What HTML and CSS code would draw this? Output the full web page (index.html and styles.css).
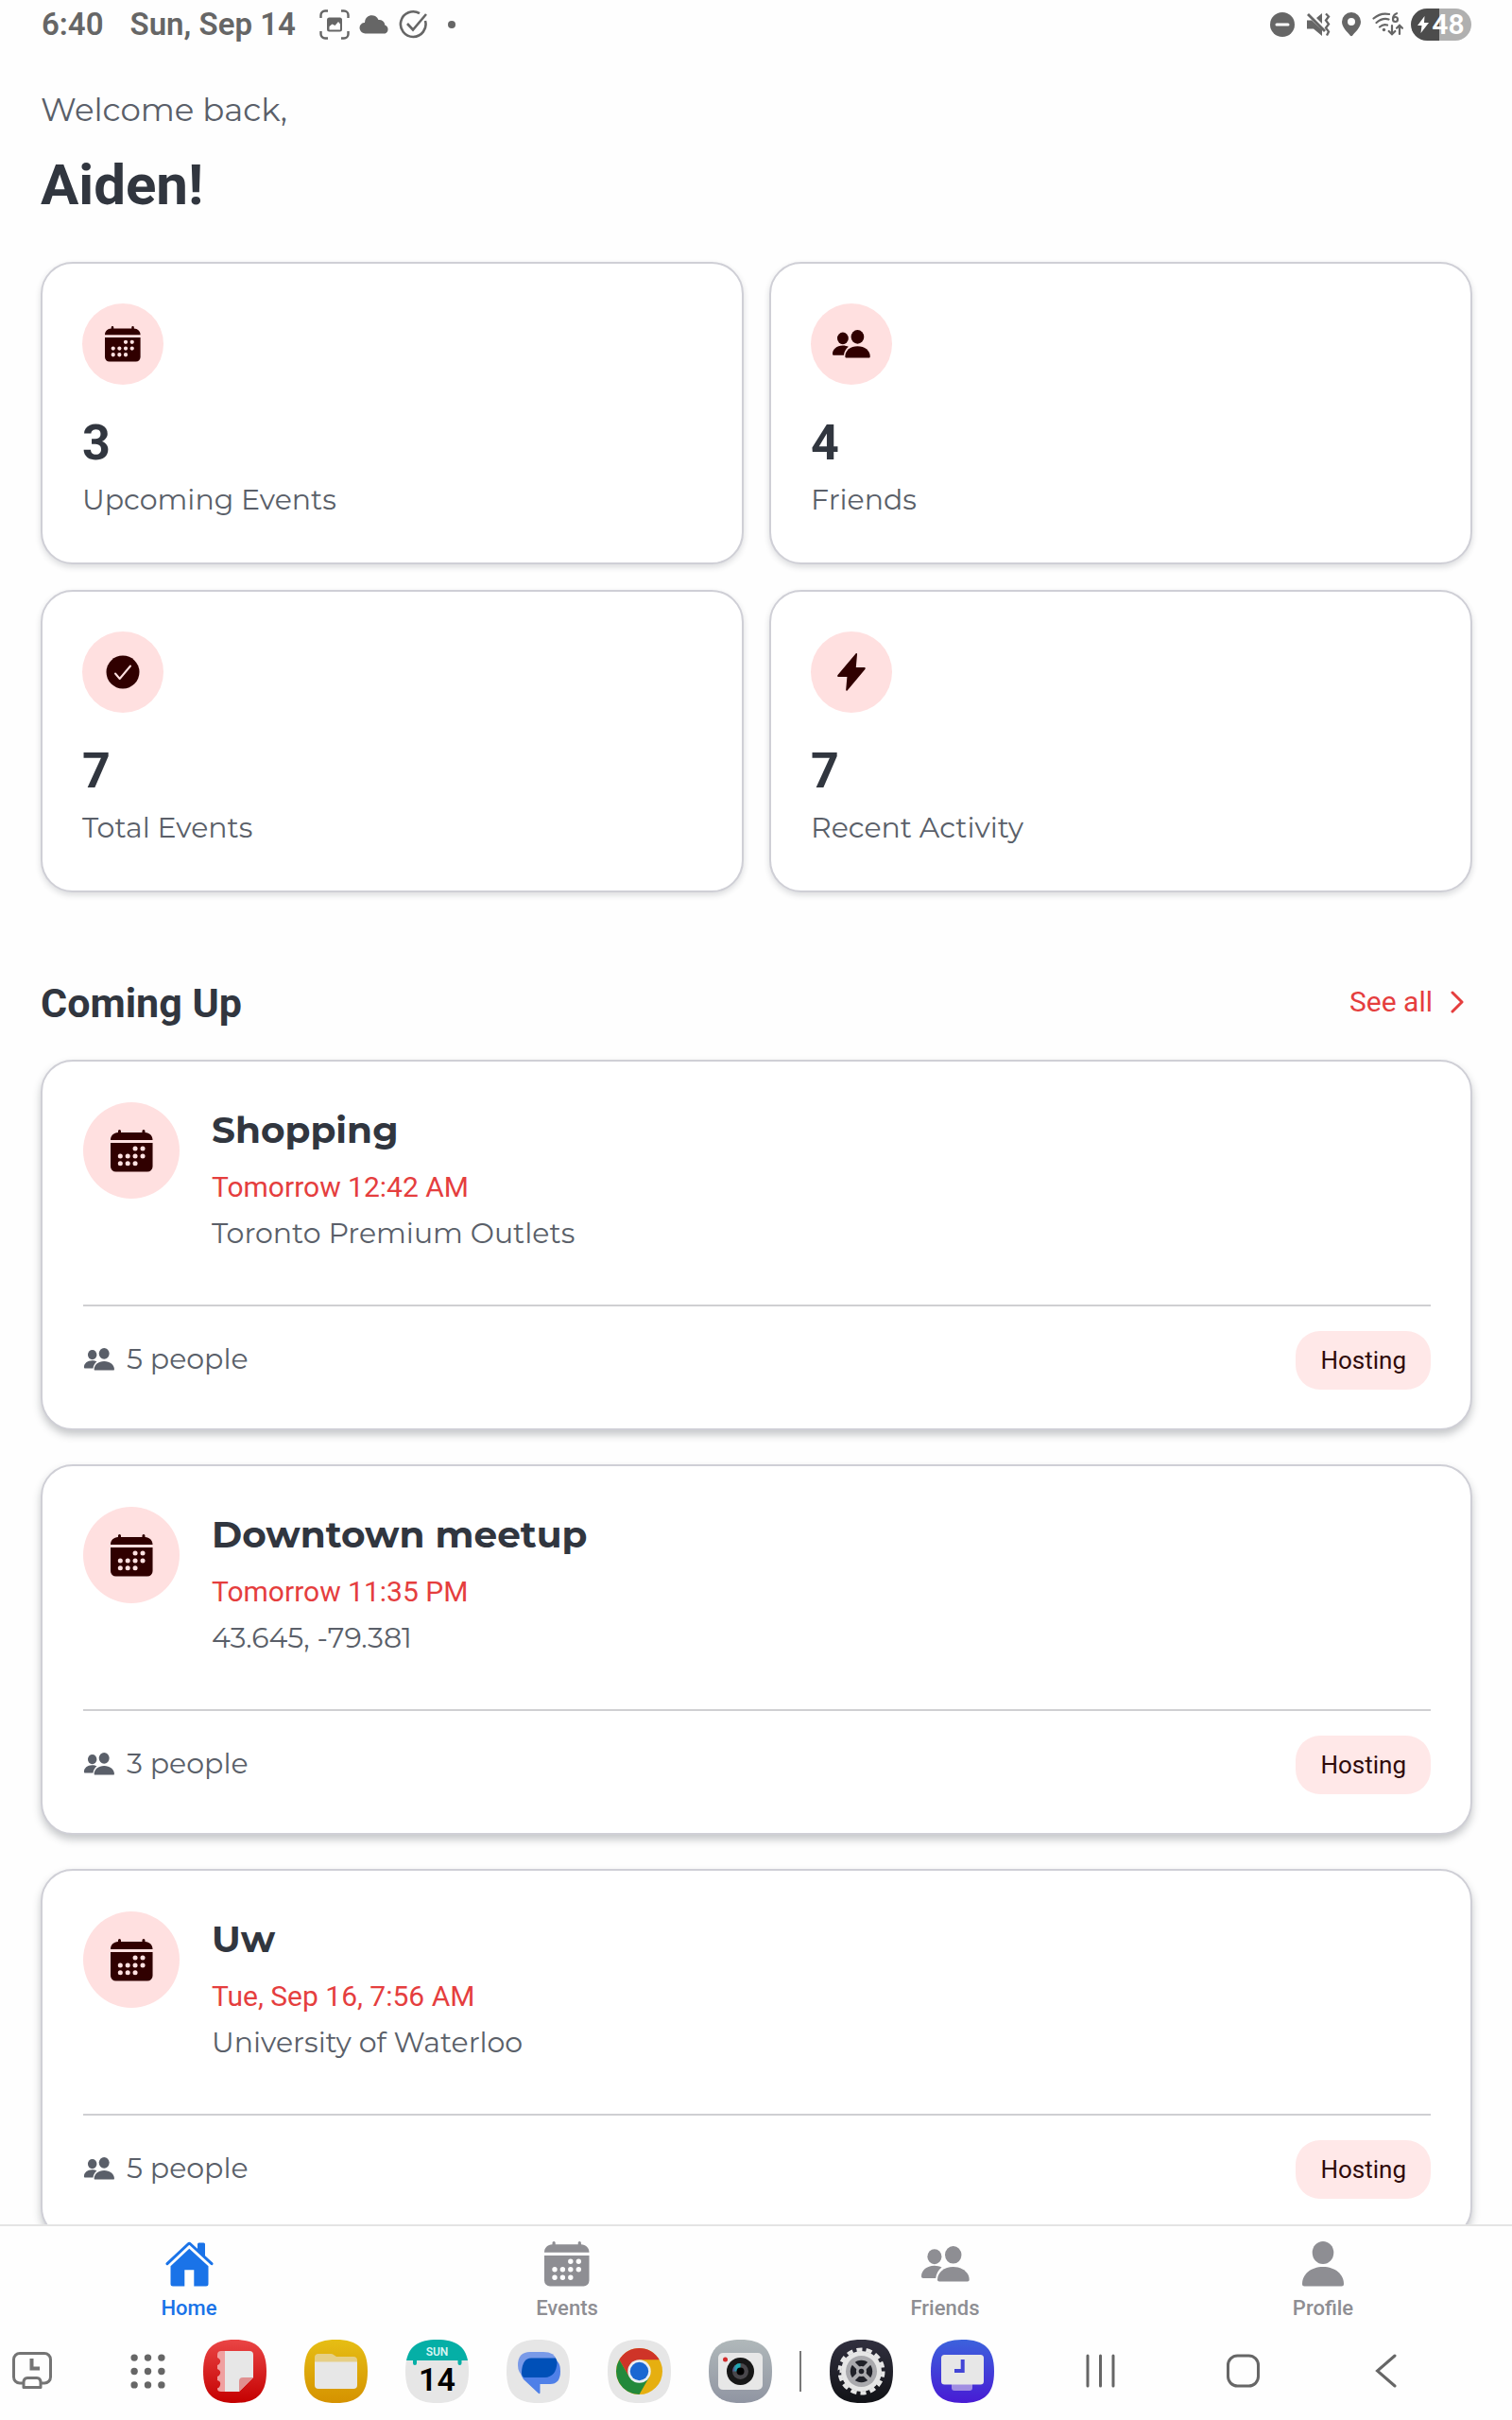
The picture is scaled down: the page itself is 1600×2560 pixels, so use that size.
FILE: index.html
```html
<!DOCTYPE html>
<html lang="en">
<head>
<meta charset="utf-8">
<meta name="viewport" content="width=device-width, initial-scale=1">
<title>Home</title>
<link rel="stylesheet" href="styles.css">
</head>
<body>
<svg class="sprite" aria-hidden="true">
  <symbol id="calendar" viewBox="0 0 48 48">
    <path d="M8.500 3.200V1.600a1.600 1.600 0 0 1 3.200 0v1.600h24V1.600a1.600 1.600 0 0 1 3.200 0v1.600c5 .3 8.600 3.500 8.600 8.500H0C0 6.700 3.500 3.500 8.500 3.200z"/>
    <path fill-rule="evenodd" d="M0 15h47.500v26.500a6 6 0 0 1-6 6H6a6 6 0 0 1-6-6zM25.100 21.300a2.700 2.700 0 1 0 5.400 0a2.700 2.700 0 1 0-5.400 0zM33.600 21.300a2.700 2.700 0 1 0 5.400 0a2.700 2.700 0 1 0-5.400 0zM8.300 29.800a2.700 2.700 0 1 0 5.400 0a2.700 2.700 0 1 0-5.400 0zM16.700 29.800a2.700 2.700 0 1 0 5.400 0a2.700 2.700 0 1 0-5.400 0zM25.100 29.800a2.700 2.700 0 1 0 5.400 0a2.700 2.700 0 1 0-5.400 0zM33.600 29.800a2.700 2.700 0 1 0 5.400 0a2.700 2.700 0 1 0-5.400 0zM8.300 38.200a2.700 2.700 0 1 0 5.400 0a2.700 2.700 0 1 0-5.400 0zM16.700 38.200a2.700 2.700 0 1 0 5.400 0a2.700 2.700 0 1 0-5.400 0zM25.100 38.200a2.700 2.700 0 1 0 5.400 0a2.700 2.700 0 1 0-5.400 0z"/>
  </symbol>
  <symbol id="people" viewBox="0 0 51 38">
    <ellipse cx="33.700" cy="9.300" rx="8.700" ry="9.300"/>
    <ellipse cx="13.900" cy="11.200" rx="7.500" ry="8"/>
    <path d="M17 35.500C17 28 24 22 33.700 22s17 6 17 13.500c0 1.300-.7 1.900-2 1.900H19c-1.300 0-2-.6-2-1.900z"/>
    <path d="M0 32c0-6 5.500-11.200 13.800-11.200 3 0 5.600.7 7.700 1.800C18 25.200 15.800 29.500 15.200 34H2c-1.300 0-2-.7-2-2z"/>
  </symbol>
  <symbol id="check" viewBox="0 0 36 36">
    <circle cx="18" cy="18" r="17.500"/>
    <path class="mark" d="M10 19.500l4.700 5.500L26 11.500"/>
  </symbol>
  <symbol id="bolt" viewBox="0 0 30 40">
    <path d="M19.500.5c.9-.9 1.600-.4 1.500.8L19.800 15h8.600c1.300 0 1.700.9 1 2L10.800 39.200c-.9 1-1.700.6-1.600-.7L10.400 25H1.500c-1.300 0-1.700-.9-1-2z"/>
  </symbol>
  <symbol id="home" viewBox="0 0 51 48">
    <path d="M34 10V3a1.500 1.500 0 0 1 1.500-1.500h5A1.500 1.500 0 0 1 42 3v14z"/>
    <path d="M25.300 7.800L45.500 26.300V45a2.500 2.500 0 0 1-2.500 2.500H30.300V30.300H20.300V47.500H8A2.500 2.500 0 0 1 5.500 45V26.300z"/>
    <path class="roof" d="M2 23.700L24 3q1.300-1.200 2.600 0L49 23.700"/>
  </symbol>
  <symbol id="person" viewBox="0 0 44 48">
    <ellipse cx="22" cy="12" rx="11.300" ry="12"/>
    <path d="M0 45C0 35 9 27 22 27s22 8 22 18c0 1.700-.8 2.500-2.500 2.500h-39C.8 47.500 0 46.700 0 45z"/>
  </symbol>
  <symbol id="tile" viewBox="0 0 67 67">
    <path d="M33.500 0C57 0 67 10 67 33.500S57 67 33.500 67 0 57 0 33.500 10 0 33.500 0z"/>
  </symbol>
</svg>

<div class="screen">
  <header class="status">
    <div class="status-side">
      <span class="clock">6:40</span>
      <span class="date">Sun, Sep 14</span>
      <span class="status-icons">
        <svg width="32" height="32" viewBox="0 0 32 32"><path d="M1.500 9V6a4.500 4.500 0 0 1 4.500-4.500h3M23 1.500h3A4.500 4.500 0 0 1 30.500 6v3M30.500 23v3a4.500 4.500 0 0 1-4.500 4.500h-3M9 30.500H6A4.500 4.500 0 0 1 1.500 26v-3" fill="none" stroke="currentColor" stroke-width="2.400"/><rect x="8" y="8.500" width="16" height="15" rx="2.500" fill="currentColor"/><path fill="#fff" d="M10.500 21.500v-3.500l3-2.500 3 1.500 3.500-4 2 2.500v6z"/></svg>
        <svg width="32" height="20" viewBox="0 0 32 20"><path fill="currentColor" d="M6.500 19.500A6 6 0 0 1 3 8.700 4 4 0 0 1 6 8 7.500 7.500 0 0 1 20.500 5a6 6 0 0 1 6.800 5.500A4.800 4.800 0 0 1 27.500 19.500z"/></svg>
        <svg width="32" height="32" viewBox="0 0 32 32"><path d="M22 4.200A13.300 13.300 0 1 0 28 12M9 15l6 6.500L29 5" fill="none" stroke="currentColor" stroke-width="2.600"/></svg>
        <svg class="more" width="8" height="8" viewBox="0 0 8 8"><circle cx="4" cy="4" r="4" fill="currentColor"/></svg>
      </span>
    </div>
    <div class="status-side status-right">
      <svg width="26" height="26" viewBox="0 0 26 26"><circle cx="13" cy="13" r="13" fill="currentColor"/><path d="M7 13h12" stroke="#fff" stroke-width="3" stroke-linecap="round"/></svg>
      <svg width="26" height="26" viewBox="0 0 26 26"><path fill="currentColor" d="M1 8.500h5L17 19v6L8 17.500H1zM11 6l6-5v11zM1 3l2-2 18 18-2 2z"/><path d="M21 1.500l3 3-3 4 3 4-3 4 3 4-2 4" fill="none" stroke="currentColor" stroke-width="2.300"/></svg>
      <svg width="20" height="26" viewBox="0 0 20 26"><path fill="currentColor" fill-rule="evenodd" d="M10 0a10 10 0 0 1 10 10c0 6-6 11-8.700 14.500q-1.300 1.500-2.600 0C6 21 0 16 0 10A10 10 0 0 1 10 0zM6 10a4 4 0 1 0 8 0a4 4 0 1 0-8 0z"/></svg>
      <svg width="33" height="26" viewBox="0 0 33 26"><g fill="none" stroke="currentColor" stroke-width="2.200" stroke-linecap="round"><path d="M1.500 6.500Q9 0 18 2M4.500 11Q11 5.500 17.500 7.500M8 15.500q4-3.500 8-2M21 14v9m-3.300-3l3.300 3.300L24.300 20M29 23v-9m-3 2.700l3-3 3 3M26 1.200q-3.800 1.200-4 5.800"/><circle cx="24.500" cy="7.500" r="2.500"/></g><circle cx="12.500" cy="18.500" r="1.700" fill="currentColor"/></svg>
      <span class="battery"><svg width="12" height="18" viewBox="0 0 12 18"><path fill="#fff" d="M7.500 0L0 10h4.500L3.500 18 12 7H7z"/></svg>48</span>
    </div>
  </header>

  <main class="content">
    <p class="welcome">Welcome back,</p>
    <h1 class="name">Aiden!</h1>

    <section class="stats" aria-label="Overview">
      <article class="card stat"><span class="badge"><svg class="icon-38"><use href="#calendar"/></svg></span><strong class="count">3</strong><span class="label">Upcoming Events</span></article>
      <article class="card stat"><span class="badge"><svg class="icon-40"><use href="#people"/></svg></span><strong class="count">4</strong><span class="label">Friends</span></article>
      <article class="card stat"><span class="badge"><svg class="icon-36"><use href="#check"/></svg></span><strong class="count">7</strong><span class="label">Total Events</span></article>
      <article class="card stat"><span class="badge"><svg class="icon-40"><use href="#bolt"/></svg></span><strong class="count">7</strong><span class="label">Recent Activity</span></article>
    </section>

    <section class="coming">
      <div class="section-head">
        <h2>Coming Up</h2>
        <a class="see-all" href="#events">See all<svg width="16" height="24" viewBox="0 0 16 24"><path d="M3 2l10 10L3 22" fill="none" stroke="currentColor" stroke-width="3" stroke-linecap="round" stroke-linejoin="round"/></svg></a>
      </div>

      <article class="card event">
        <div class="event-top">
          <span class="badge badge-large"><svg class="icon-45"><use href="#calendar"/></svg></span>
          <div class="event-text"><h3>Shopping</h3><p class="when">Tomorrow 12:42 AM</p><p class="where">Toronto Premium Outlets</p></div>
        </div>
        <div class="event-foot"><span class="going"><svg class="icon-32"><use href="#people"/></svg>5 people</span><span class="role">Hosting</span></div>
      </article>

      <article class="card event">
        <div class="event-top">
          <span class="badge badge-large"><svg class="icon-45"><use href="#calendar"/></svg></span>
          <div class="event-text"><h3>Downtown meetup</h3><p class="when">Tomorrow 11:35 PM</p><p class="where">43.645, -79.381</p></div>
        </div>
        <div class="event-foot"><span class="going"><svg class="icon-32"><use href="#people"/></svg>3 people</span><span class="role">Hosting</span></div>
      </article>

      <article class="card event">
        <div class="event-top">
          <span class="badge badge-large"><svg class="icon-45"><use href="#calendar"/></svg></span>
          <div class="event-text"><h3>Uw</h3><p class="when">Tue, Sep 16, 7:56 AM</p><p class="where">University of Waterloo</p></div>
        </div>
        <div class="event-foot"><span class="going"><svg class="icon-32"><use href="#people"/></svg>5 people</span><span class="role">Hosting</span></div>
      </article>
    </section>
  </main>

  <nav class="tabs" aria-label="Main">
    <a class="tab active" href="#home" aria-current="page"><svg class="icon-50"><use href="#home"/></svg>Home</a>
    <a class="tab" href="#events"><svg class="icon-48"><use href="#calendar"/></svg>Events</a>
    <a class="tab" href="#friends"><svg class="icon-50"><use href="#people"/></svg>Friends</a>
    <a class="tab" href="#profile"><svg class="icon-48"><use href="#person"/></svg>Profile</a>
  </nav>

  <footer class="dock">
    <button class="key" type="button" aria-label="Recent screen"><svg width="44" height="40" viewBox="0 0 44 40"><g fill="none" stroke="#747474" stroke-width="3"><path d="M12.500 33H9a6.500 6.500 0 0 1-6.500-6.500V8A6.500 6.500 0 0 1 9 1.500h26A6.500 6.500 0 0 1 41.500 8v18.500A6.500 6.500 0 0 1 35 33h-4"/><path d="M17 27.500h10q4 0 4 5v5H13v-5q0-5 4-5z" stroke-linejoin="round"/></g><path d="M21.500 7v10.500H30" fill="none" stroke="#747474" stroke-width="4"/></svg></button>
    <div class="apps">
      <button class="dots" type="button" aria-label="All apps"><svg width="36" height="36" viewBox="0 0 36 36" fill="#666"><circle cx="4" cy="4" r="3.600"/><circle cx="18" cy="4" r="3.600"/><circle cx="32" cy="4" r="3.600"/><circle cx="4" cy="18" r="3.600"/><circle cx="18" cy="18" r="3.600"/><circle cx="32" cy="18" r="3.600"/><circle cx="4" cy="32" r="3.600"/><circle cx="18" cy="32" r="3.600"/><circle cx="32" cy="32" r="3.600"/></svg></button>
      <button type="button" aria-label="Notes"><svg viewBox="0 0 67 67"><defs><linearGradient id="red" x2="0" y2="1"><stop stop-color="#ea4545"/><stop offset="1" stop-color="#c40000"/></linearGradient></defs><use href="#tile" fill="url(#red)"/><path fill="#f0a0a0" d="M24 12h-5q-4 0-4 4v3q4 2 3 5t-3 3v4q4 2 3 5t-3 3v4q4 1 3 5t-3 3v1q0 3 4 3h5z"/><path fill="#e7e7e7" d="M23 12h26q4 0 4 4v24L38 55H23z"/><path fill="#e09090" d="M53 40L38 55V44q0-4 4-4z"/></svg></button>
      <button type="button" aria-label="Files"><svg viewBox="0 0 67 67"><defs><linearGradient id="gold" x2="0" y2="1"><stop stop-color="#e6be14"/><stop offset="1" stop-color="#d59200"/></linearGradient></defs><use href="#tile" fill="url(#gold)"/><path fill="#e6cf86" d="M11 30V19q0-4 4-4h13q2 0 3 1l3 2h18q4 0 4 4v8z"/><path fill="#e7e7e7" d="M11 23.500h45V48q0 4-4 4H15q-4 0-4-4z"/></svg></button>
      <button type="button" aria-label="Calendar"><svg viewBox="0 0 67 67"><defs><clipPath id="top"><path d="M0 0h67v22H0z"/></clipPath></defs><use href="#tile" fill="#e6e6e6"/><use href="#tile" fill="#05afa6" clip-path="url(#top)"/><path stroke="#05afa6" stroke-width="4" stroke-linecap="round" d="M10 20v5M57.500 20v5"/><text x="33.500" y="16.500" class="day">SUN</text><text x="33.500" y="54" class="number">14</text></svg></button>
      <button type="button" aria-label="Messages"><svg viewBox="0 0 67 67"><use href="#tile" fill="#e6e6e6"/><path fill="#4f80e8" d="M15 33q0-13 13-13h18q11 0 11 13.500T46 47H35.500v9q0 2-2 .5L18 42q-3-4-3-9z"/><path fill="#799ae8" d="M25 13h14q12 0 14 9c1 8-4 16-12 17H18q-6-4-6-12 0-14 13-14z"/><path fill="#0050b8" d="M26 19.500h26q1.500 2 1.500 5-1 15-13 15.500h-22q-3-2-2.500-6 1-14.500 10-14.500z"/></svg></button>
      <button type="button" aria-label="Chrome"><svg viewBox="0 0 67 67"><use href="#tile" fill="#e6e6e6"/><circle cx="33.500" cy="33.500" r="24.500" fill="#e6af10"/><path fill="#cf3428" d="M12.300 21.200A24.500 24.500 0 0 1 54.700 21.200H33.500V33.500L22.900 39.600z"/><path fill="#23893b" d="M12.300 21.200A24.500 24.500 0 0 0 33.500 58L44.100 39.600 33.500 33.500 22.900 39.600z"/><circle cx="33.500" cy="33.500" r="12.200" fill="#e9eef2"/><circle cx="33.500" cy="33.500" r="9.700" fill="#1967d2"/></svg></button>
      <button type="button" aria-label="Camera"><svg viewBox="0 0 67 67"><defs><linearGradient id="steel" x2="0" y2="1"><stop stop-color="#b0b8ba"/><stop offset="1" stop-color="#9095a2"/></linearGradient><linearGradient id="lens"><stop stop-color="#624080"/><stop offset=".5" stop-color="#20aab4"/></linearGradient></defs><use href="#tile" fill="url(#steel)"/><rect x="10" y="14" width="47" height="39" rx="5" fill="#e7e7e7"/><circle cx="17.500" cy="21" r="2.500" fill="#d32b2b"/><circle cx="33.500" cy="33.500" r="14.500" fill="#171717"/><circle cx="33.500" cy="33.500" r="8.500" fill="#49474b"/><path d="M25 33.500a8.500 8.500 0 0 1 8.500-8.500v8.500z" fill="url(#lens)"/><circle cx="33.500" cy="33.500" r="4" fill="#000"/></svg></button>
    </div>
    <span class="divider"></span>
    <div class="apps">
      <button type="button" aria-label="Settings"><svg viewBox="0 0 67 67"><defs><linearGradient id="night" x2="0" y2="1"><stop stop-color="#31303f"/><stop offset="1" stop-color="#111216"/></linearGradient></defs><use href="#tile" fill="url(#night)"/><circle cx="33.500" cy="33.500" r="21.500" fill="#e6e6e6"/><circle cx="33.500" cy="33.500" r="23" fill="none" stroke="#e6e6e6" stroke-width="4" pathLength="140" stroke-dasharray="6 4"/><circle cx="33.500" cy="33.500" r="16.500" fill="#a9a9ad"/><circle cx="33.500" cy="33.500" r="11.700" fill="#1f2028"/><path d="M24 24l19 19M43 24L24 43" stroke="#a9a9ad" stroke-width="4"/><circle cx="33.500" cy="33.500" r="5.500" fill="#a9a9ad"/><circle cx="33.500" cy="33.500" r="2.800" fill="#1f2028"/></svg></button>
      <button type="button" aria-label="Screen time"><svg viewBox="0 0 67 67"><defs><linearGradient id="indigo" x2="0" y2="1"><stop stop-color="#3c62dc"/><stop offset="1" stop-color="#481bd4"/></linearGradient></defs><use href="#tile" fill="url(#indigo)"/><path fill="#a18ee2" d="M22 46h22v5q0 3-3 3H25q-3 0-3-3z"/><rect x="11" y="16" width="45" height="31.500" rx="3.500" fill="#e7e7e7"/><path d="M33.700 21v12H25" fill="none" stroke="#4345d6" stroke-width="4"/></svg></button>
    </div>
    <div class="keys">
      <button class="key" type="button" aria-label="Recents"><svg width="44" height="36" viewBox="0 0 44 36"><path d="M8 2v32M21.500 2v32M35 2v32" stroke="#666" stroke-width="3" stroke-linecap="round"/></svg></button>
      <button class="key" type="button" aria-label="Home screen"><svg width="44" height="36" viewBox="0 0 44 36"><rect x="5.500" y="2" width="32" height="32" rx="10" fill="none" stroke="#666" stroke-width="3"/></svg></button>
      <button class="key" type="button" aria-label="Back"><svg width="44" height="36" viewBox="0 0 44 36"><path d="M31 2L12.500 18 31 34" fill="none" stroke="#666" stroke-width="3" stroke-linecap="round"/></svg></button>
    </div>
  </footer>
</div>
</body>
</html>
```
FILE: styles.css
```css
* { box-sizing: border-box; }

body {
  margin: 0;
  background: #fefefe;
  color: #31363f;
  font-family: Roboto, sans-serif;
}

h1, h2, h3, p { margin: 0; }
svg { display: block; flex: none; }
a { text-decoration: none; }
button { padding: 0; border: 0; background: none; }

.sprite { position: absolute; width: 0; height: 0; }

.screen {
  display: flex;
  flex-direction: column;
  height: 100vh;
}

/* Status bar */
.status {
  display: flex;
  flex: none;
  align-items: center;
  justify-content: space-between;
  height: 51px;
  padding: 0 43px 0 44px;
  color: #666;
  font-size: 33px;
  font-weight: 600;
}
.status-side { display: flex; align-items: center; }
.date { margin-left: 28px; }
.status-icons { display: flex; align-items: center; gap: 10px; margin-left: 25px; }
.more { margin-left: 10px; }
.status-right { gap: 12px; }
.battery {
  display: flex;
  align-items: center;
  justify-content: center;
  gap: 3px;
  width: 64px;
  height: 34px;
  margin-left: -4px;
  border-radius: 17px;
  background: linear-gradient(90deg, #4c4c4c 47%, #b0b0b0 47%);
  color: #fff;
  font-size: 30px;
}

/* Scrolling content */
.content {
  flex: 1;
  min-height: 0;
  overflow-y: auto;
  padding: 43px 42px 36px 43px;
  scrollbar-width: none;
}
.welcome, .label, .where, .going, .event h3 { font-family: Montserrat, Inter, sans-serif; }
.welcome, .label, .where, .going { color: #5a5f69; font-weight: 400; }
.welcome { font-size: 34px; line-height: 44px; }
.name { margin-top: 22px; font-size: 60px; line-height: 72px; }

.card {
  border: 2px solid #cfcfd6;
  border-radius: 34px;
  background: #fff;
}

.badge {
  display: flex;
  align-items: center;
  justify-content: center;
  width: 86px;
  height: 86px;
  border-radius: 50%;
  background: #ffe0e0;
  fill: #300000;
}
.badge-large { flex: none; width: 102px; height: 102px; }

.stats {
  display: grid;
  grid-template-columns: 1fr 1fr;
  gap: 27px;
  margin-top: 45px;
}
.stat {
  display: flex;
  flex-direction: column;
  padding: 42px 42px 44px;
  box-shadow: 0 3px 6px rgba(40, 45, 55, .16);
}
.count { margin-top: 30px; font-size: 52px; line-height: 64px; }
.label { margin-top: 6px; font-size: 30px; line-height: 44px; }

.section-head {
  display: flex;
  align-items: center;
  justify-content: space-between;
  margin: 90px 0 33px;
  padding-right: 8px;
}
.section-head h2 { font-size: 43px; line-height: 54px; }
.see-all {
  display: flex;
  align-items: center;
  gap: 18px;
  padding-bottom: 3px;
  color: #e53e3e;
  font-size: 30px;
}

.event { padding: 43px 42px 41px 43px; box-shadow: 0 5px 9px rgba(40, 45, 55, .26); }
.event + .event { margin-top: 36px; }
.event-top { display: flex; gap: 34px; height: 216px; border-bottom: 2px solid #cfcfd2; }
.event h3 { margin-top: 4px; font-size: 39px; font-weight: 700; line-height: 50px; }
.when { margin-top: 16px; color: #e53e3e; font-size: 30px; line-height: 40px; }
.where { margin-top: 8px; font-size: 30px; line-height: 42px; }
.event-foot { display: flex; align-items: center; justify-content: space-between; margin-top: 26px; height: 62px; }
.going { display: flex; align-items: center; gap: 12px; padding-bottom: 3px; font-size: 30px; fill: #5a5f69; }
.role {
  padding: 0 26px;
  border-radius: 26px;
  background: #ffe8e8;
  color: #300b0b;
  font-size: 26px;
  line-height: 62px;
}

.icon-32 { width: 34px; height: 24px; }
.icon-36 { width: 36px; height: 36px; }
.icon-38 { width: 38px; height: 38px; }
.icon-40 { width: 40px; height: 40px; }
.icon-45 { width: 45px; height: 45px; }
.icon-48 { width: 48px; height: 48px; }
.icon-50 { width: 51px; height: 48px; }
.mark { fill: none; stroke: #ffe0e0; stroke-width: 2; stroke-linecap: round; stroke-linejoin: round; }
.roof { fill: none; stroke: #1a73e8; stroke-width: 3; stroke-linecap: round; }

/* Tab bar */
.tabs {
  display: grid;
  flex: none;
  grid-template-columns: repeat(4, 1fr);
  padding-top: 16px;
  border-top: 2px solid #e4e4e4;
  background: #fefefe;
}
.tab {
  display: flex;
  flex-direction: column;
  align-items: center;
  gap: 9px;
  color: #8e8e93;
  fill: currentColor;
  font-size: 22px;
  font-weight: 500;
  line-height: 28px;
}
.tab.active { color: #1a73e8; }

/* System dock */
.dock {
  display: flex;
  flex: none;
  align-items: center;
  height: 104px;
  padding: 0 111px 0 12px;
}
.apps { display: flex; align-items: center; gap: 40px; }
.apps button svg { width: 67px; height: 67px; }
.apps .dots { margin-left: 82px; }
.apps .dots svg { width: 37px; height: 37px; }
.divider { width: 2px; height: 43px; margin: 0 30px 0 29px; background: #777; }
.keys { display: flex; gap: 107px; margin-left: auto; }
.day { fill: #d8f5f3; font: 600 12px Roboto, sans-serif; text-anchor: middle; }
.number { fill: #000; font: 600 34px Roboto, sans-serif; text-anchor: middle; }
```
